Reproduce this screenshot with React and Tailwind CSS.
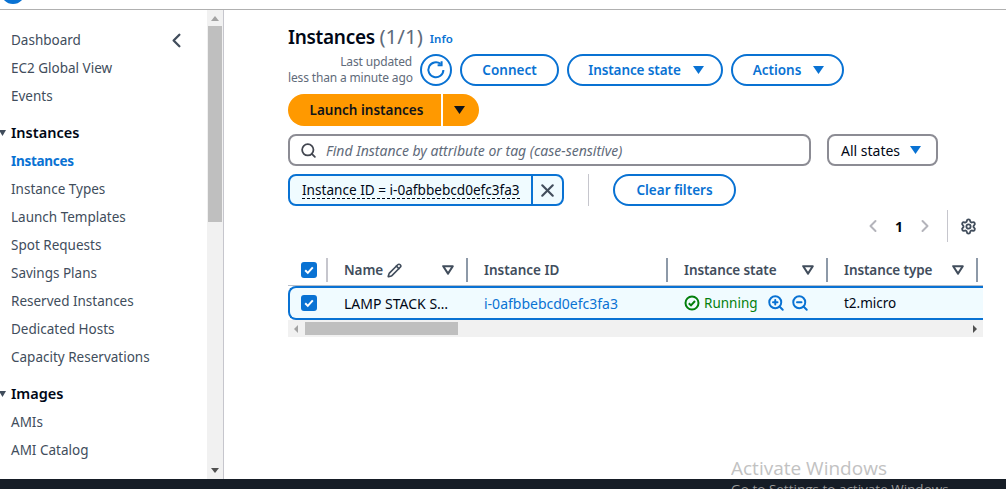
import { ChevronLeft, ChevronRight, X, Search, Pencil, Settings, ZoomIn, ZoomOut } from "lucide-react";

const font = { fontFamily: '"Noto Sans", sans-serif' };

function Caret({ className }) {
  return (
    <svg width="13" height="10" viewBox="0 0 13 10" className={className}>
      <path d="M1 1h11L6.5 9z" fill="currentColor" />
    </svg>
  );
}

function FilterCaret() {
  return (
    <svg width="12" height="10" viewBox="0 0 12 10" className="text-[#414d5c]">
      <path d="M1.2 1.2h9.6L6 8.6z" fill="none" stroke="currentColor" strokeWidth="2" strokeLinejoin="round" />
    </svg>
  );
}

function Checkbox() {
  return (
    <div className="flex h-4 w-4 items-center justify-center rounded-[3px] bg-[#0972d3]">
      <svg width="12" height="12" viewBox="0 0 12 12">
        <path d="M2.2 6.3l2.6 2.6 5-5.6" fill="none" stroke="white" strokeWidth="2" />
      </svg>
    </div>
  );
}

function NavItem({ label, active }) {
  return (
    <div className={`flex h-7 items-center pl-[11px] text-[13.5px] ${active ? "font-bold tracking-[-0.3px] text-[#0972d3]" : "text-[#414d5c]"}`}>
      {label}
    </div>
  );
}

function NavHeading({ label }) {
  return (
    <div className="flex h-7 items-center text-[14.5px] font-semibold text-[#000716]">
      <svg width="7" height="6" viewBox="0 0 7 6" className="mr-[5px] -ml-[1px] text-[#414d5c]">
        <path d="M0 0h7L3.5 6z" fill="currentColor" />
      </svg>
      {label}
    </div>
  );
}

function BlueButton({ children, className }) {
  return (
    <button className={`flex h-8 items-center justify-center gap-[11px] rounded-full border-2 border-[#0972d3] bg-white text-[13.5px] font-semibold text-[#0972d3] ${className}`}>
      {children}
    </button>
  );
}

function HeaderCell({ width, label, extra, filter }) {
  return (
    <div className={`flex h-6 shrink-0 items-center border-r-2 border-[#8d99a8] pl-4 pr-3 text-[13.5px] font-semibold tracking-[-0.1px] text-[#414d5c] ${width}`}>
      <span>{label}</span>
      {extra}
      {filter && <span className="ml-auto flex"><FilterCaret /></span>}
    </div>
  );
}

export default function App() {
  return (
    <div className="relative flex h-[489px] w-[1006px] flex-col overflow-hidden bg-white" style={font}>
      <div className="relative h-[10px] shrink-0 overflow-hidden border-b border-[#b0b0b0]">
        <div className="absolute -top-[20px] left-[1px] h-6 w-6 rounded-full bg-[#0972d3]" />
      </div>

      <div className="flex min-h-0 flex-1">
        <aside className="flex w-[224px] shrink-0 border-r border-[#c6c6cd]">
          <nav className="relative w-[207px] shrink-0 overflow-hidden pt-4">
            <ChevronLeft size={23} strokeWidth={2.4} className="absolute left-[165px] top-[19px] text-[#414d5c]" />
            <NavItem label="Dashboard" />
            <NavItem label="EC2 Global View" />
            <NavItem label="Events" />
            <div className="h-[9px]" />
            <NavHeading label="Instances" />
            <NavItem label="Instances" active />
            <NavItem label="Instance Types" />
            <NavItem label="Launch Templates" />
            <NavItem label="Spot Requests" />
            <NavItem label="Savings Plans" />
            <NavItem label="Reserved Instances" />
            <NavItem label="Dedicated Hosts" />
            <NavItem label="Capacity Reservations" />
            <div className="h-[9px]" />
            <NavHeading label="Images" />
            <NavItem label="AMIs" />
            <NavItem label="AMI Catalog" />
          </nav>
          <div className="flex w-4 shrink-0 flex-col items-center bg-[#f1f1f1] py-[6px]">
            <svg width="8" height="5" viewBox="0 0 8 5"><path d="M0 5h8L4 0z" fill="#a3a3a3" /></svg>
            <div className="mt-[5px] h-[196px] w-[14px] bg-[#bfbfbf]" />
            <svg width="8" height="5" viewBox="0 0 8 5" className="mt-auto"><path d="M0 0h8L4 5z" fill="#505050" /></svg>
          </div>
        </aside>

        <main className="min-w-0 flex-1 pl-16 pt-[14px]">
          <div className="flex h-6 items-center">
            <h1 className="text-[19px] font-semibold tracking-[-0.3px] text-[#000716]">
              Instances <span className="text-[20.5px] font-normal tracking-normal text-[#5f6b7a]">(1/1)</span>
            </h1>
            <span className="ml-[7px] mt-[5px] text-[11.5px] font-semibold text-[#0972d3]">Info</span>
          </div>

          <div className="mt-[6px] flex h-8 items-center">
            <div className="w-[124px] whitespace-nowrap text-right text-[12px] leading-4 tracking-[-0.15px] text-[#5f6b7a]">
              <div>Last updated</div>
              <div>less than a minute ago</div>
            </div>
            <button className="ml-2 flex h-8 w-8 items-center justify-center rounded-full border-2 border-[#0972d3] text-[#0972d3]">
              <svg width="20" height="20" viewBox="0 0 20 20" fill="none" stroke="currentColor" strokeWidth="2">
                <path d="M14.6 3.9A7.5 7.5 0 1 0 17.4 10" />
                <path d="M15.6 1.2v4h-4" strokeLinejoin="miter" />
              </svg>
            </button>
            <BlueButton className="ml-2 w-[99px]">Connect</BlueButton>
            <BlueButton className="ml-2 w-[156px] pl-[3px] tracking-[-0.1px]">Instance state <Caret /></BlueButton>
            <BlueButton className="ml-2 w-[113px] pl-[3px]">Actions <Caret /></BlueButton>
          </div>

          <div className="mt-2 flex h-8 text-[#0f141a]">
            <button className="flex w-[153px] items-center justify-center rounded-l-full bg-[#ff9900] pl-1 text-[13.5px] font-semibold">Launch instances</button>
            <button className="ml-[2px] flex w-[36px] items-center justify-center rounded-r-full bg-[#ff9900] pr-[4px]"><Caret /></button>
          </div>

          <div className="mt-2 flex h-8">
            <div className="flex w-[523px] items-center rounded-lg border-2 border-[#8c8c94] pl-[10px] text-[14px] italic text-[#5f6b7a]">
              <Search size={17} strokeWidth={2.5} className="mr-[9px] text-[#424650]" />
              Find Instance by attribute or tag (case-sensitive)
            </div>
            <div className="ml-4 flex w-[111px] items-center rounded-lg border-2 border-[#8c8c94] pl-3 text-[14px] text-[#000716]">
              All states
              <Caret className="ml-[9px] text-[#0972d3]" />
            </div>
          </div>

          <div className="mt-2 flex h-8 items-center">
            <div className="flex h-8 w-[276px] items-center rounded-lg border-2 border-[#0972d3] bg-[#f0fbff] text-[13.6px] text-[#000716]">
              <span className="ml-3 w-[218px] whitespace-nowrap border-b border-dashed border-[#000716] leading-[17px]">Instance ID = i-0afbbebcd0efc3fa3</span>
              <span className="ml-[11px] flex h-full flex-1 items-center justify-center border-l-2 border-[#0972d3] text-[#414d5c]"><X size={21} strokeWidth={2.4} /></span>
            </div>
            <div className="ml-6 h-8 w-px bg-[#c6c6cd]" />
            <BlueButton className="ml-6 w-[123px]">Clear filters</BlueButton>
          </div>

          <div className="flex h-[40px] w-[695px] items-center justify-end">
            <ChevronLeft size={20} strokeWidth={2.4} className="text-[#b4b4bb]" />
            <span className="mx-[12px] text-[14px] font-bold text-[#000716]">1</span>
            <ChevronRight size={20} strokeWidth={2.4} className="text-[#b4b4bb]" />
            <div className="mx-[12px] h-8 w-px bg-[#c6c6cd]" />
            <Settings size={17} strokeWidth={2.6} className="mr-[6px] text-[#414d5c]" />
          </div>

          <div className="w-[695px] overflow-hidden">
            <div className="flex h-[40px] items-start border-b border-[#b6bec9] pt-3">
              <div className="flex h-6 w-[40px] shrink-0 items-center border-r-2 border-[#c6c6cd] pl-[13px]"><Checkbox /></div>
              <HeaderCell
                width="w-[140px]"
                label="Name"
                filter
                extra={<Pencil size={15} strokeWidth={2.6} className="ml-[4px]" />}
              />
              <div className="flex h-6 w-[200px] shrink-0 items-center border-r-2 border-[#8d99a8] pl-4 text-[13.5px] font-semibold text-[#414d5c]">Instance ID</div>
              <HeaderCell width="w-[160px]" label="Instance state" filter />
              <HeaderCell width="w-[150px]" label="Instance type" filter />
            </div>
            <div className="flex h-[34px] items-center rounded-l-lg border-y-2 border-l-2 border-[#0972d3] bg-[#f0fbff] text-[13.5px] text-[#000716]">
              <div className="w-[37px] shrink-0 pl-[11px]"><Checkbox /></div>
              <div className="w-[140px] shrink-0 whitespace-nowrap pl-[17px] text-[14px]">LAMP STACK S…</div>
              <div className="w-[200px] shrink-0 pl-[17px] text-[14px] text-[#0972d3]">i-0afbbebcd0efc3fa3</div>
              <div className="flex w-[160px] shrink-0 items-center pl-[17px] text-[#037f0c]">
                <svg width="16" height="16" viewBox="0 0 16 16" fill="none" stroke="currentColor" strokeWidth="2">
                  <circle cx="8" cy="8" r="6.5" />
                  <path d="M4.8 8.2l2.2 2.2 4-4.4" />
                </svg>
                <span className="ml-1">Running</span>
                <ZoomIn size={18} strokeWidth={2.6} className="ml-[9px] text-[#0972d3]" />
                <ZoomOut size={18} strokeWidth={2.6} className="ml-[6px] text-[#0972d3]" />
              </div>
              <div className="pl-[17px]">t2.micro</div>
            </div>
            <div className="flex h-[17px] items-center bg-[#f1f1f1]">
              <svg width="4" height="8" viewBox="0 0 4 8" className="ml-[6px]"><path d="M4 0v8L0 4z" fill="#a3a3a3" /></svg>
              <div className="ml-[7px] h-[13px] w-[153px] bg-[#bfbfbf]" />
              <svg width="4" height="8" viewBox="0 0 4 8" className="ml-auto mr-[6px]"><path d="M0 0v8l4-4z" fill="#505050" /></svg>
            </div>
          </div>
        </main>
      </div>

      <div className="h-[10px] shrink-0 bg-[#161d26]" />

      <div className="absolute left-[731px] top-[456px] h-[33px] overflow-hidden text-[19px] leading-6 text-[#c2c2c2]" style={{ fontFamily: '"Open Sans", sans-serif' }}>
        Activate Windows
        <div className="mt-[1px] text-[13.5px] leading-4 text-[#9a9a9a]">Go to Settings to activate Windows.</div>
      </div>
    </div>
  );
}
